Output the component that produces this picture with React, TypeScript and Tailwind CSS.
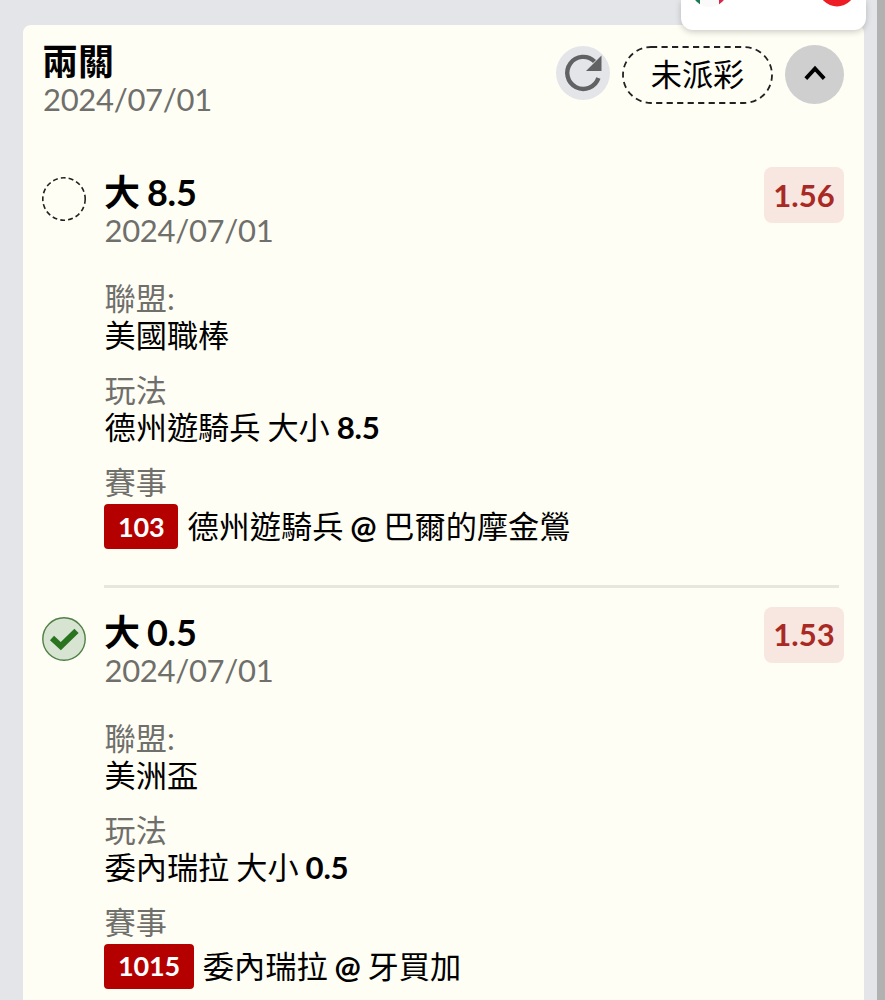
type Bet = {
  pick: string;
  line: string;
  date: string;
  odds: string;
  league: string;
  team: string;
  matchNo: string;
  away: string;
  home: string;
  won: boolean;
};

const bets: Bet[] = [
  {
    pick: "大",
    line: "8.5",
    date: "2024/07/01",
    odds: "1.56",
    league: "美國職棒",
    team: "德州遊騎兵",
    matchNo: "103",
    away: "德州遊騎兵",
    home: "巴爾的摩金鶯",
    won: false,
  },
  {
    pick: "大",
    line: "0.5",
    date: "2024/07/01",
    odds: "1.53",
    league: "美洲盃",
    team: "委內瑞拉",
    matchNo: "1015",
    away: "委內瑞拉",
    home: "牙買加",
    won: true,
  },
];

function StatusIcon({ won }: { won: boolean }) {
  if (!won) {
    return (
      <svg className="size-11 shrink-0" viewBox="0 0 44 44" fill="none">
        <circle cx="22" cy="22" r="21.2" stroke="#222" strokeWidth="1.6" strokeDasharray="4.9 3.1" />
      </svg>
    );
  }
  return (
    <svg className="size-11 shrink-0" viewBox="0 0 44 44" fill="none">
      <circle cx="22" cy="22" r="21.2" fill="#d8e4d2" stroke="#4f8045" strokeWidth="1.4" />
      <path d="M10 21L18.8 29.2L34.5 13.8" stroke="#2a7420" strokeWidth="6" />
    </svg>
  );
}

function BetRow({ bet }: { bet: Bet }) {
  return (
    <div className="flex">
      <div className="-ml-px w-[62px] shrink-0 pt-[11px]">
        <StatusIcon won={bet.won} />
      </div>
      <div className="flex-1">
        <div className="flex items-start justify-between">
          <div>
            <p className="whitespace-nowrap pt-[3px] text-[36px] leading-[46px] font-bold [word-spacing:-1.5px] tracking-[-0.2px]">
              {bet.pick} {bet.line}
            </p>
            <p className="-mt-[3px] pl-[0.5px] text-[31px] leading-[37px] tracking-[-0.3px] text-[#6f6f6b]">{bet.date}</p>
          </div>
          <span className="mt-px flex h-14 w-20 items-center justify-center rounded-lg bg-[#f8e7e0] text-[31px] font-bold text-[#a92a24]">
            {bet.odds}
          </span>
        </div>

        <div className="mt-[31px] space-y-[18px] text-[31.2px] leading-[37px] [word-spacing:-1px]">
          <div className="pl-[0.5px]">
            <p className="text-[#6f6f6b]">聯盟:</p>
            <p>{bet.league}</p>
          </div>
          <div className="pl-[0.5px]">
            <p className="text-[#6f6f6b]">玩法</p>
            <p className="whitespace-nowrap">
              {bet.team} 大小 <b className="tracking-[-0.3px]">{bet.line}</b>
            </p>
          </div>
          <div>
            <p className="pl-[0.5px] text-[#6f6f6b]">賽事</p>
            <div className="mt-[3px] flex items-center">
              <span className="mr-[9px] flex h-[45px] items-center rounded bg-[#b50000] px-[14px] pb-px text-[27px] font-bold tracking-[-0.2px] text-white">
                {bet.matchNo}
              </span>
              <span className="whitespace-nowrap">
                {bet.away} <span className="font-bold tracking-[-0.3px]">@</span> {bet.home}
              </span>
            </div>
          </div>
        </div>
      </div>
    </div>
  );
}

export default function App() {
  return (
    <div
      lang="zh-TW"
      className="relative flex h-[1000px] w-[885px] overflow-hidden bg-[#e4e5e8] font-['Lato','Noto_Sans_CJK_TC',sans-serif] text-black"
    >
      <div className="ml-[23px] mt-[25px] w-[841px] shrink-0 rounded-t-lg bg-[#fffef5] px-5 pt-[13px]">
        <div className="flex items-start justify-between">
          <div>
            <h1 className="text-[36px] leading-[46px] font-bold -ml-px">兩關</h1>
            <p className="-mt-[3px] text-[31px] leading-[37px] tracking-[-0.3px] text-[#6f6f6b]">2024/07/01</p>
          </div>
          <div className="flex h-[66px] items-center pt-[7px]">
            <button className="mb-1 mr-3 flex size-[54px] items-center justify-center rounded-full bg-[#e4e5e8]">
              <svg className="size-[54px]" viewBox="0 0 54 54" fill="none">
                <path d="M42.4 32A16 16 0 1 1 38.5 15.5" stroke="#606264" strokeWidth="4.4" />
                <path d="M45.5 9.5V25H30Z" fill="#606264" />
              </svg>
            </button>
            <button className="relative mr-3 flex h-[58px] w-[151px] items-center justify-center pb-px text-[31.2px]">
              <svg className="absolute inset-0" width="151" height="58" fill="none">
                <rect x="1" y="1" width="149" height="56" rx="28" stroke="#222" strokeWidth="1.8" strokeDasharray="6.2 4.3" />
              </svg>
              未派彩
            </button>
            <button className="flex size-[59px] items-center justify-center rounded-full bg-[#cfcfcf] pb-1">
              <svg width="22" height="16" viewBox="0 0 22 16" fill="none">
                <path d="M1.8 13.6L11 3.6L20.2 13.6" stroke="#000" strokeWidth="3.8" />
              </svg>
            </button>
          </div>
        </div>

        <div className="mt-[48px]">
          <BetRow bet={bets[0]} />
          <div className="ml-[61px] mr-[5px] mt-9 mb-[18px] h-[2.5px] bg-[#e9e6df]" />
          <BetRow bet={bets[1]} />
        </div>
      </div>

      <div className="ml-auto w-2 bg-[#b1b1b1]" />

      {/* floating scoreboard, mostly scrolled off the top */}
      <div className="absolute left-[681px] top-0 h-[30px] w-[185px] overflow-hidden rounded-b-xl bg-white shadow-[0_2px_6px_rgba(0,0,0,0.2)]">
        <svg width="185" height="30" fill="none">
          <clipPath id="flag">
            <circle cx="28.5" cy="-11" r="18" />
          </clipPath>
          <g clipPath="url(#flag)">
            <rect x="10" y="-30" width="9" height="40" fill="#1c7a55" />
            <rect x="19" y="-30" width="19" height="40" fill="#fafafa" />
            <rect x="38" y="-30" width="9" height="40" fill="#d8274a" />
          </g>
          <circle cx="156" cy="-12" r="18.5" fill="#ee1c25" />
        </svg>
      </div>
    </div>
  );
}
